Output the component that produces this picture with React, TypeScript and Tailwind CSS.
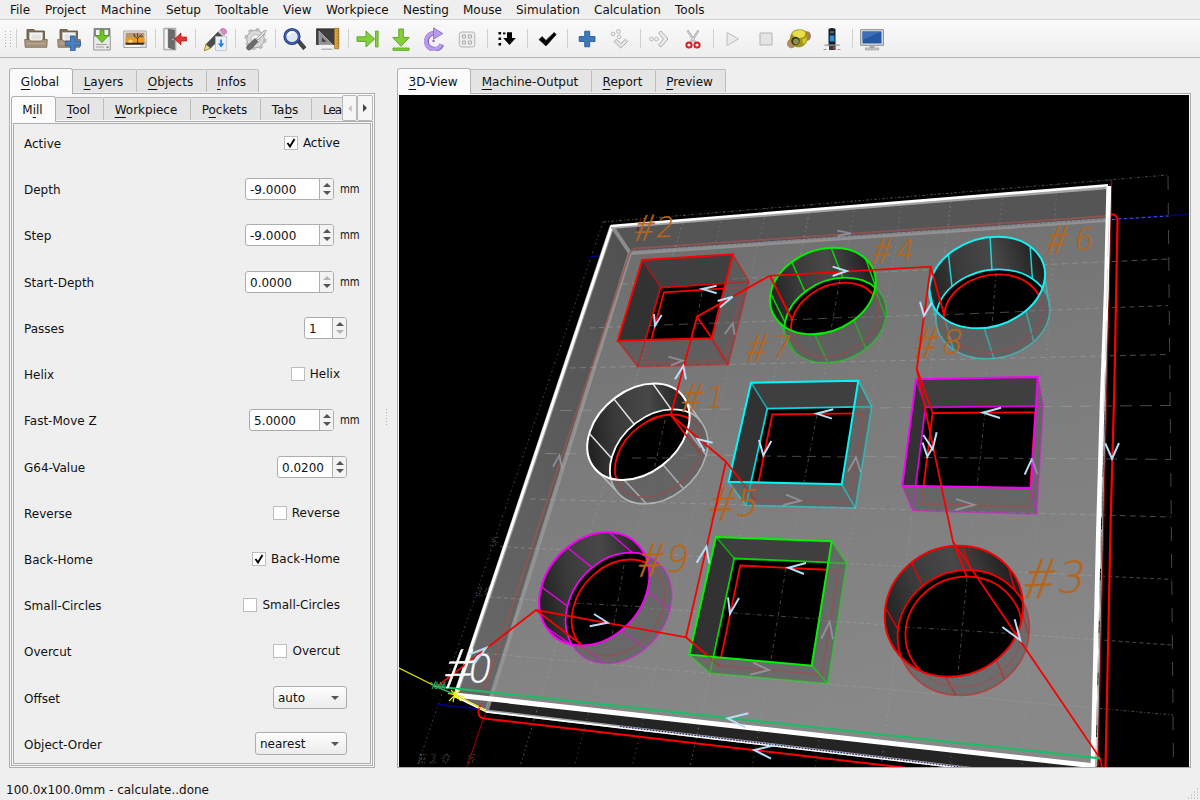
import React from "react";

type Pt = [number, number];

const MENUS: [string, string][] = [
  ["File", "w-[35px]"],
  ["Project", "w-[56px]"],
  ["Machine", "w-[65px]"],
  ["Setup", "w-[49px]"],
  ["Tooltable", "w-[68px]"],
  ["View", "w-[43px]"],
  ["Workpiece", "w-[77px]"],
  ["Nesting", "w-[60px]"],
  ["Mouse", "w-[53px]"],
  ["Simulation", "w-[78px]"],
  ["Calculation", "w-[81px]"],
  ["Tools", "w-[40px]"],
];

/* ---------- toolbar icons (24 x 24 each) ---------- */

const Folder = () => (
  <>
    <path d="M3 2.5h7l1 1.5h9.5v12H3z" fill="#7d6b55" stroke="#5f4f3c" strokeWidth=".8" />
    <path d="M5.5 5.5h13v10h-13z" fill="#f4f4f4" stroke="#cfcfcf" strokeWidth=".6" />
    <path d="M7.5 7.5h9v5h-9z" fill="#e2e2e2" />
    <path d="M.7 12.5h4.600l1.600 1.500h10.400l1.400-1.500h4.600l-.5 7.800H1.200z" fill="#a6947c" stroke="#7a6850" strokeWidth=".8" />
    <path d="M2 16.500h20" stroke="#b7a68e" strokeWidth="1.400" />
  </>
);

const ICONS: Record<string, React.ReactNode> = {
  open: <Folder />,
  add: (
    <>
      <Folder />
      <path d="M13.500 9h4.600v5.200h5.400v4.600h-5.400v5h-4.600v-5H8.400v-4.600h5.100z" fill="#4a80c0" stroke="#2c5c99" strokeWidth=".9" />
    </>
  ),
  save: (
    <>
      <path d="M4 1.500h16v7.500H4z" fill="#8b8e88" stroke="#6d6f6b" strokeWidth=".7" />
      <path d="M6 3h12v6H6z" fill="#f2f2f2" />
      <path d="M3.700 9h16.600v14H3.700z" fill="#e8e8e6" stroke="#8b8e88" strokeWidth=".9" />
      <path d="M6 17.500h11M6 20h8" stroke="#a2a4a0" />
      <path d="M10 3.200h4v5.400h4.400L12 15.600 5.600 8.600H10z" fill="#6fc42c" stroke="#438e0d" strokeWidth=".8" />
      <circle cx="17.500" cy="20.300" r="1" fill="#777" />
    </>
  ),
  image: (
    <>
      <path d="M.8 4h22.400v16.500H.8z" fill="#f4f4f2" stroke="#8d8d8a" strokeWidth=".8" />
      <path d="M2.500 5.600h19v12h-19z" fill="#b99a6e" />
      <path d="M2.500 11h19v4.500h-19z" fill="#f09a25" />
      <circle cx="7.500" cy="15" r="2.200" fill="#ffe27a" />
      <path d="M2.500 15.700h19v2h-19z" fill="#3c2a16" />
      <path d="M14.600 16V10.500M14.600 12l-4.200-4M14.600 11.500l4-4.200M14.600 10V6M12 9.500l-1-3M17 9l3 .5" stroke="#3c2a16" strokeWidth=".8" fill="none" />
      <path d="M17 20.500l6-5v5z" fill="#dedede" stroke="#9a9a9a" strokeWidth=".5" />
    </>
  ),
  exit: (
    <>
      <path d="M.8 1.300h12v21.500H.8z" fill="#dcdcdc" stroke="#8a8a8a" strokeWidth=".8" />
      <path d="M2.300 3h4v18.500h-4z" fill="#fafafa" />
      <path d="M5.200 2.200 11.500 3v19.500l-6.300-2z" fill="#6a6a6a" stroke="#444" strokeWidth=".5" />
      <circle cx="10" cy="12.500" r=".7" fill="#ddd" />
      <path d="M11.500 12 18 6v4h5.600v4H18v4z" fill="#e4322e" stroke="#b01512" strokeWidth=".7" />
    </>
  ),
  edit: (
    <>
      <path d="M1.500 23.500 3 17.500 15.500 4.500l4.500 4L7.500 21z" fill="#4c4e4b" stroke="#2c2e2b" strokeWidth=".6" />
      <path d="M1.300 23.600 3 17.500l4.500 3.700z" fill="#f2e27a" stroke="#8a7d20" strokeWidth=".5" />
      <path d="m15 5 4.500 4 1.300-1.400-4.500-4z" fill="#cfcfcf" />
      <path d="m17 3.200c2-3 6-1.500 6.500.8.200 2-1 3-2.300 4z" fill="#dd86c8" stroke="#a4529a" strokeWidth=".6" />
      <path d="M12.500 9.500h11V23.500h-11z" fill="#e9eff5" stroke="#b3bac2" strokeWidth=".7" />
      <path d="M17.200 12.500h1.800v4h2.300L18.100 20.500l-3.200-4h2.300z" fill="#1f83e0" />
    </>
  ),
  gear: (
    <>
      <circle cx="12.500" cy="12" r="8.800" fill="#dadada" stroke="#a2a2a2" strokeWidth="1" />
      <circle cx="12.500" cy="12" r="10" fill="none" stroke="#bcbcbc" strokeWidth="2.200" strokeDasharray="3.900 3.950" />
      <circle cx="12.500" cy="12" r="4.500" fill="#f3f3f3" stroke="#a9a9a9" strokeWidth=".8" />
      <path d="m13.500 11.500 6.500-7 2.500-1.500.8 1-1.800 2.400-6.500 6.600z" fill="#e6e6e6" stroke="#777" strokeWidth=".6" />
      <path d="m12 11.500 3 3-7.500 8c-2 1.500-5-.8-3.500-3.200z" fill="#6b6b6b" stroke="#484848" strokeWidth=".7" />
    </>
  ),
  search: (
    <>
      <path d="m13.500 14.500 2.500-2.500 7 8.200-2.700 2.600z" fill="#444" stroke="#222" strokeWidth=".6" />
      <circle cx="9" cy="9.500" r="7.200" fill="#dfe9f5" stroke="#233a86" strokeWidth="2.800" />
      <circle cx="9" cy="9.500" r="7" fill="none" stroke="#5271bd" strokeWidth="1" />
      <path d="M5 8.500c1-3 4-4 6.500-3" stroke="#fff" strokeWidth="1.800" fill="none" />
    </>
  ),
  measure: (
    <>
      <path d="M.3 1.800h22V17.500H.3z" fill="#3d3d3d" stroke="#222" strokeWidth=".7" />
      <path d="M6 21.500h10l1 1.500H5z" fill="#b5b5b5" />
      <path d="M3 17.500V4L16.500 17.500z" fill="#8d9094" stroke="#b8bbbe" strokeWidth=".7" />
      <path d="M6 14.800V10.500l4.400 4.300z" fill="#3d3d3d" />
      <path d="M18.500 1.300h4.300v20.500h-4.300z" fill="#d9a445" stroke="#96691c" strokeWidth=".7" />
      <path d="M20.500 4h2M20.500 7h2M20.500 10h2M20.500 13h2M20.500 16h2M20.500 19h2" stroke="#8b6219" strokeWidth=".7" />
    </>
  ),
  right: (
    <>
      <path d="M1 9.800h9V4l8.600 8L10 20v-5.600H1z" fill="#83cf3e" stroke="#55a112" strokeWidth=".9" />
      <path d="M19.500 4h2.600v16h-2.600z" fill="#83cf3e" stroke="#55a112" strokeWidth=".8" />
    </>
  ),
  down: (
    <>
      <path d="M9.800 2h4.600v8.500h5.800L12 19.300 3.800 10.500h6z" fill="#83cf3e" stroke="#55a112" strokeWidth=".9" />
      <path d="M4 21h16v2.400H4z" fill="#83cf3e" stroke="#55a112" strokeWidth=".8" />
    </>
  ),
  rotate: (
    <>
      <path d="M19.800 17.500A8 8 0 1 1 12.500 6.300" stroke="#8a67c4" strokeWidth="5" fill="none" />
      <path d="M19.300 17.200A8 8 0 1 1 12.500 6.300" stroke="#b89bea" strokeWidth="3.600" fill="none" />
      <path d="m11.500.8 9.300 5.800-9.300 5.600z" fill="#b89bea" stroke="#8a67c4" strokeWidth=".8" />
      <circle cx="11.500" cy="14" r="1.200" fill="#8a67c4" />
    </>
  ),
  fit: (
    <>
      <rect x="4.300" y="5" width="15.500" height="15" rx="2.500" fill="#ededed" stroke="#b5b5b5" />
      <path d="M7.500 11V8H10.500V11zM13.500 8h3v3h-3zM16.500 14v3h-3v-3zM10.500 17h-3v-3h3z" stroke="#aaa" strokeWidth="1" fill="none" />
    </>
  ),
  list: (
    <>
      <path d="M3.500 5h2.600v2.600H3.500zM3.500 10.500h2.600v2.600H3.500zM3.500 16h2.600v2.600H3.500z" fill="#000" />
      <path d="M12 5.200h5v5.800h3.800l-6.300 7-6.300-7H12z" fill="#000" />
      <path d="M8 5.500h2.500v1.800H8z" fill="#000" />
    </>
  ),
  check: <path d="m4 12.600 3-3 4 3.800 8.200-8 2 2.200L11 19z" fill="#000" stroke="#000" strokeWidth=".6" />,
  plus: <path d="M9.700 4.200h5v5.300H20v5h-5.300v5.300h-5v-5.300H4.200v-5h5.500z" fill="#3f78b9" stroke="#2a5c9c" strokeWidth=".9" />,
  dots: (
    <>
      <circle cx="5" cy="7" r="1.900" fill="#eee" stroke="#bcbcbc" />
      <circle cx="10.500" cy="4.500" r="1.900" fill="#eee" stroke="#bcbcbc" />
      <circle cx="11" cy="9.800" r="1.900" fill="#eee" stroke="#bcbcbc" />
      <path d="m6 14.500 2.200-2.200 4.600 4.200 4.600-4.200 2.200 2.200-6.800 6.500z" fill="#e5e5e5" stroke="#adadad" />
    </>
  ),
  chev: (
    <>
      <circle cx="3.500" cy="12" r="1.900" fill="#eee" stroke="#bcbcbc" />
      <circle cx="8.500" cy="12" r="1.900" fill="#eee" stroke="#bcbcbc" />
      <path d="m10.500 6 2.500-2 7 8-7 8-2.500-2 5-6z" fill="#ececec" stroke="#adadad" />
    </>
  ),
  cut: (
    <>
      <path d="M6.500 3.500 15 16.500M17.500 3.500 9 16.500" stroke="#989898" strokeWidth="2.200" />
      <path d="M6.700 4 14.700 16M17.300 4 9.300 16" stroke="#e4e4e4" strokeWidth="1" />
      <circle cx="8" cy="18" r="2.600" fill="none" stroke="#d42027" strokeWidth="2" />
      <circle cx="16" cy="18" r="2.600" fill="none" stroke="#d42027" strokeWidth="2" />
    </>
  ),
  play: <path d="M6 5.500v13l11.500-6.500z" fill="#ebebeb" stroke="#bdbdbd" strokeWidth="1" />,
  stop: <path d="M6 6h12v12H6z" fill="#e4e4e4" stroke="#b4b4b4" strokeWidth="1" />,
  mill: (
    <>
      <ellipse cx="4.500" cy="16.500" rx="4" ry="4.300" fill="#b98a6a" stroke="#8d6547" strokeWidth=".6" />
      <ellipse cx="20" cy="9" rx="3.400" ry="4.300" fill="#a97c55" stroke="#80603e" strokeWidth=".6" />
      <path d="M5 5.500C8 1.500 16 1.500 19 4.500c2.500 3 2.500 9-1 13-4 4-10 3.500-13.500 0-2.500-3-2-9 .5-12z" fill="#a0951a" />
      <path d="M5.500 6C9 2 16 2.500 18 5c1 3-1 6-5 6S5 9 5.500 6z" fill="#e9df4a" />
      <circle cx="8.500" cy="14" r="4.200" fill="#33331b" />
      <circle cx="9" cy="14.500" r="2.900" fill="#8a8f50" />
      <path d="M15 12c3 0 4-1 5-3 0 5-2 8-4 8z" fill="#d6c51f" />
    </>
  ),
  router: (
    <>
      <path d="M8.500 2q3.500-2 7 0v17h-7z" fill="#16202b" />
      <path d="M9.800 8.500h4.600v6H9.800z" fill="#2f8de0" />
      <path d="M10.200 4h3.600v2.500h-3.600z" fill="#536272" />
      <path d="M4.500 17.500h15.200v1.300H4.500z" fill="#9a9a9a" />
      <path d="M9 19h6.500v4H9z" fill="#3a3a3a" />
      <path d="M13 20h2.500v1.800H13z" fill="#c33" />
      <path d="M3.500 22.500h3M17.500 22.500h3" stroke="#9a9a9a" />
    </>
  ),
  monitor: (
    <>
      <path d="M.7 2.700h22.700v15.600H.7z" fill="#e0e0e0" stroke="#7e7e7e" strokeWidth=".9" />
      <path d="M2.500 4.500h19v12h-19z" fill="#2558a0" />
      <path d="M2.500 4.500h19L2.500 13z" fill="#3a6fb8" />
      <path d="M9.500 18.500h5v2.500h-5z" fill="#aaa" />
      <path d="M5.500 21h13.200v1.900H5.500z" fill="#d2d2d2" stroke="#909090" strokeWidth=".7" />
    </>
  ),
};

const TOOLBAR = "| open add save image | exit | edit | gear | search measure | right down rotate fit | list | check | plus dots | chev cut | play stop mill router | monitor".split(" ");

const Toolbar = () => (
  <div className="flex h-[39px] shrink-0 items-center border-y border-t-[#d2d2d2] border-b-[#b4b4b4] bg-linear-to-b from-[#fafafa] to-[#eeeeee]">
    <div className="ml-[5px] grid w-[8px] grid-cols-2 gap-x-[2px] gap-y-[2px]">
      {Array.from({ length: 12 }, (_, i) => (
        <span key={i} className="size-px bg-[#b0b0b0]" />
      ))}
    </div>
    {TOOLBAR.map((n, i) =>
      n === "|" ? (
        <span key={i} className="flex h-[19px] w-[7px] justify-center">
          <span className="w-px bg-[#d0d0d0]" />
        </span>
      ) : (
        <svg key={i} viewBox="0 0 24 24" className="mr-[5px] ml-[4px] size-6 shrink-0">
          {ICONS[n]}
        </svg>
      ),
    )}
  </div>
);

/* ---------- tabs and form ---------- */

const Mn = ({ text, at }: { text: string; at: number }) => (
  <span>
    {text.slice(0, at)}
    <span className="underline decoration-1 underline-offset-[3px]">{text.slice(at, at + 1)}</span>
    {text.slice(at + 1)}
  </span>
);

const Tab = ({ text, at = 0, w, active }: { text: string; at?: number; w: string; active?: boolean }) => (
  <div
    className={
      (active
        ? "h-[26px] rounded-t-[3px] border border-b-0 border-[#b0b0b0] bg-[#fbfbfb] pr-[2px] "
        : "mb-px h-[23px] rounded-tr-[2px] border border-l-0 border-b-0 border-[#bcbcbc] bg-[#e5e5e5] pt-[2px] pr-[2px] ") +
      "flex shrink-0 items-center justify-center overflow-hidden whitespace-nowrap " +
      w
    }
  >
    <Mn text={text} at={at} />
  </div>
);

const Tri = ({ up, dim }: { up?: boolean; dim?: boolean }) => (
  <svg viewBox="0 0 8 4" className="h-[4px] w-[8px]">
    <path d={up ? "M4 0 8 4H0z" : "M0 0h8L4 4z"} fill={dim ? "#b4b4b4" : "#555"} />
  </svg>
);

const Spin = ({ value, w, upOff, downOff }: { value: string; w: string; upOff?: boolean; downOff?: boolean }) => (
  <div className={"flex h-[22px] overflow-hidden rounded-[3px] border border-[#adadad] bg-white " + w}>
    <span className="flex-1 pt-px pl-[4px] leading-[21px]">{value}</span>
    <span className="flex w-[14px] flex-col items-center justify-center gap-[4px] border-l border-[#adadad] bg-[#f3f3f3]">
      <Tri up dim={upOff} />
      <Tri dim={downOff} />
    </span>
  </div>
);

const Check = ({ text, on }: { text: string; on?: boolean }) => (
  <div className="mr-[19px] flex items-center gap-[5px]">
    <span className="flex size-[14px] items-center justify-center border border-[#bdbdbd] bg-white">
      {on && (
        <svg viewBox="0 0 10 10" className="size-[10px]">
          <path d="M1.500 5 4 8.500 8.500 1" stroke="#000" strokeWidth="1.900" fill="none" />
        </svg>
      )}
    </span>
    {text}
  </div>
);

const Combo = ({ text, w }: { text: string; w: string }) => (
  <div className={"mr-[12px] flex h-[23px] items-center justify-between rounded-[3px] border border-[#adadad] bg-linear-to-b from-[#fdfdfd] to-[#ececec] pt-px pr-[7px] pl-[4px] " + w}>
    {text}
    <Tri />
  </div>
);

const Unit = ({ children }: { children: React.ReactNode }) => (
  <div className="flex items-center gap-[6px]">
    {children}
    <span className="w-[19px] origin-left scale-x-[.84]">mm</span>
  </div>
);

const ROWS: [string, React.ReactNode][] = [
  ["Active", <Check text="Active" on />],
  ["Depth", <Unit><Spin value="-9.0000" w="w-[89px]" /></Unit>],
  ["Step", <Unit><Spin value="-9.0000" w="w-[89px]" /></Unit>],
  ["Start-Depth", <Unit><Spin value="0.0000" w="w-[89px]" upOff /></Unit>],
  ["Passes", <div className="mr-[12px]"><Spin value="1" w="w-[43px]" downOff /></div>],
  ["Helix", <Check text="Helix" />],
  ["Fast-Move Z", <Unit><Spin value="5.0000" w="w-[85px]" /></Unit>],
  ["G64-Value", <div className="mr-[12px]"><Spin value="0.0200" w="w-[70px]" /></div>],
  ["Reverse", <Check text="Reverse" />],
  ["Back-Home", <Check text="Back-Home" on />],
  ["Small-Circles", <Check text="Small-Circles" />],
  ["Overcut", <Check text="Overcut" />],
  ["Offset", <Combo text="auto" w="w-[74px]" />],
  ["Object-Order", <Combo text="nearest" w="w-[92px]" />],
];

const LeftPanel = () => (
  <div className="flex w-[366px] flex-col">
    <div className="flex h-[25px] items-end">
      <Tab text="Global" w="w-[64px] relative z-10 -mb-px" active />
      <Tab text="Layers" w="w-[64px]" />
      <Tab text="Objects" w="w-[70px]" />
      <Tab text="Infos" w="w-[52px]" />
    </div>
    <div className="flex h-[675px] flex-col border border-[#adadad] bg-[#f9f9f9] px-px pt-px pb-px">
      <div className="flex h-[26px] items-end">
        <Tab text="Mill" at={1} w="w-[45px] relative z-10 -mb-px" active />
        <Tab text="Tool" w="w-[48px]" />
        <Tab text="Workpiece" w="w-[87px]" />
        <Tab text="Pockets" at={1} w="w-[70px]" />
        <Tab text="Tabs" at={2} w="w-[51px]" />
        <div className="mb-px flex h-[23px] w-[30px] items-center border-t border-[#bcbcbc] bg-[#e5e5e5] pt-[2px] pl-[11px] tracking-[-1px] whitespace-nowrap">Lea</div>
        <div className="flex h-[26px] w-[15px] items-center justify-center rounded-[2px] border border-[#b8b8b8] bg-[#f6f6f6]">
          <svg viewBox="0 0 4 8" className="h-[7px] w-[4px]"><path d="M4 0v8L0 4z" fill="#c2c2c2" /></svg>
        </div>
        <div className="flex h-[26px] w-[16px] items-center justify-center rounded-[2px] border border-[#b8b8b8] bg-[#f6f6f6]">
          <svg viewBox="0 0 4 8" className="h-[8px] w-[4px]"><path d="M0 0v8l4-4z" fill="#444" /></svg>
        </div>
      </div>
      <div className="flex min-h-0 flex-1 border border-[#adadad] bg-[#f9f9f9] p-px">
        <div className="flex flex-1 flex-col justify-between border border-[#adadad] bg-[#efefef] pt-[8px] pr-[11px] pb-[8px] pl-[10px]">
          {ROWS.map(([label, field]) => (
            <div key={label} className="flex h-[22px] items-center justify-between">
              <span className="pt-[2px]">{label}</span>
              {field}
            </div>
          ))}
        </div>
      </div>
    </div>
  </div>
);

/* ---------- 3D scene ---------- */

type Ell = [l: number, r: number, t: number, b: number, lean: number];

const ellMatrix = ([l, r, t, b, d]: Ell) => {
  const w = (r - l) / 2;
  return `matrix(${Math.sqrt(w * w - d * d)} 0 ${-d} ${(b - t) / 2} ${(l + r) / 2} ${(t + b) / 2})`;
};

const ellPoint = ([l, r, t, b, d]: Ell, deg: number): Pt => {
  const a = (deg * Math.PI) / 180;
  const w = (r - l) / 2;
  return [
    (l + r) / 2 + Math.sqrt(w * w - d * d) * Math.cos(a) - d * Math.sin(a),
    (t + b) / 2 + ((b - t) / 2) * Math.sin(a),
  ];
};

const E = ({ e, ...rest }: { e: Ell } & React.SVGProps<SVGCircleElement>) => (
  <circle r="1" transform={ellMatrix(e)} vectorEffect="non-scaling-stroke" {...rest} />
);

const Hole = ({ id, color, top, bot, tool, phase }: { id: string; color: string; top: Ell; bot: Ell; tool: Ell; phase: number }) => {
  const ribs = Array.from({ length: 8 }, (_, i) => {
    const a = ellPoint(top, phase + i * 45);
    const b = ellPoint(bot, phase + i * 45);
    return `M${a[0]} ${a[1]}L${b[0]} ${b[1]}`;
  }).join("");
  return (
    <g fill="none">
      <clipPath id={id}>
        <circle r="1" transform={ellMatrix(top)} />
      </clipPath>
      <E e={bot} fill="#000" fillOpacity=".2" />
      <g opacity=".45">
        <E e={bot} stroke={color} strokeWidth="1.600" />
        <path d={ribs} stroke={color} strokeWidth="1.600" />
        <E e={tool} stroke="#b84040" strokeWidth="1.600" />
      </g>
      <g clipPath={`url(#${id})`}>
        <E e={top} fill="url(#wall)" />
        <E e={bot} fill="#000" stroke={color} strokeWidth="1.800" />
        <path d={ribs} stroke={color} strokeWidth="1.500" strokeOpacity=".85" />
        <E e={tool} stroke="#f00" strokeWidth="1.800" />
      </g>
      <E e={top} stroke={color} strokeWidth="2" />
    </g>
  );
};

const poly = (p: Pt[]) => p.map((q) => q.join(",")).join(" ");

const Pocket = ({ id, color, top, bot, tool }: { id: string; color: string; top: Pt[]; bot: Pt[]; tool: Pt[] }) => {
  const ribs = top.map((p, i) => `M${p.join(" ")}L${bot[i].join(" ")}`).join("");
  return (
    <g fill="none">
      <clipPath id={id}>
        <polygon points={poly(top)} />
      </clipPath>
      <polygon points={poly([top[3], top[2], top[1], bot[1], bot[2], bot[3]])} fill="#000" fillOpacity=".2" />
      <g opacity=".45" strokeWidth="1.700">
        <polygon points={poly(bot)} stroke={color} />
        <polygon points={poly(tool)} stroke="#b84040" />
      </g>
      <path d={ribs} stroke={color} strokeOpacity=".55" strokeWidth="1.500" />
      <g clipPath={`url(#${id})`}>
        <polygon points={poly(top)} fill="#3f3f3f" />
        <polygon points={poly([top[0], bot[0], bot[3], top[3]])} fill="#323232" />
        <polygon points={poly(bot)} fill="#000" stroke={color} strokeOpacity=".85" strokeWidth="1.800" />
        <path d={ribs} stroke={color} strokeOpacity=".6" strokeWidth="1.500" />
        <polygon points={poly(tool)} stroke="#f00" strokeWidth="1.800" />
      </g>
      <polygon points={poly(top)} stroke={color} strokeWidth="2" />
    </g>
  );
};

const GRID_ROWS: [number, number, number, number, string][] = [
  [603, 222, 1168, 175, "3 2 1 2"],
  [622, 284, 1168, 259, "6 4"],
  [590, 328, 1168, 305.5, "5 4"],
  [570, 368, 1169, 354.5, "6 4"],
  [560, 410.5, 1170, 405.5, "12 8"],
  [545, 453.5, 1170, 459.5, "12 8"],
  [530, 499, 1171, 517, "6 4"],
  [500, 546.7, 1172, 579.5, "4 3"],
  [490, 597, 1172, 645, "4 3"],
  [470, 652, 1173, 715, "3 2 1 2"],
];

const GRID_COLS: Pt[] = [
  [685, 520], [724, 574], [767, 632], [811, 690], [856, 752],
  [903, 815], [952, 881], [1003, 950], [1057, 1022], [1110, 1096],
];

const LABELS: { d: string; x: number; dx: number; y: number; h: number }[] = [
  { d: "2", x: 633, dx: 655, y: 238, h: 20 },
  { d: "4", x: 870, dx: 895, y: 261, h: 20 },
  { d: "6", x: 1044, dx: 1073, y: 251, h: 22 },
  { d: "7", x: 744, dx: 770, y: 359, h: 22 },
  { d: "8", x: 912, dx: 940, y: 355, h: 24 },
  { d: "1", x: 679, dx: 704, y: 409, h: 22 },
  { d: "5", x: 707, dx: 734, y: 517, h: 26 },
  { d: "9", x: 636, dx: 664, y: 573, h: 26 },
  { d: "3", x: 1021, dx: 1056, y: 594, h: 31 },
];

const Arrows = ({ x, y, d, dim }: { x: number; y: number; d: string; dim?: boolean }) => (
  <g transform={`translate(${x} ${y}) scale(.33333)`}>
    <path d={d} fill="none" stroke={dim ? "#a3b3c2" : "#b9dcf7"} strokeOpacity={dim ? 0.6 : 1} strokeWidth={dim ? 5.5 : 6} />
  </g>
);

const HASH = "Lato, 'Open Sans', sans-serif";
const DIGIT = "'DejaVu Sans Light', 'DejaVu Sans', sans-serif";

const Scene = () => (
  <svg viewBox="399 95 790 672" className="block h-[672px] w-[790px] bg-black">
    <defs>
      <linearGradient id="face" x1="0" y1="0" x2=".25" y2="1">
        <stop offset="0" stopColor="#686868" />
        <stop offset=".45" stopColor="#7a7a7a" />
        <stop offset="1" stopColor="#888" />
      </linearGradient>
      <linearGradient id="side" x1="1" y1="0" x2="0" y2="1">
        <stop offset="0" stopColor="#505050" />
        <stop offset="1" stopColor="#6a6a6a" />
      </linearGradient>
      <linearGradient id="wall" x1="0" y1=".7" x2="1" y2=".3">
        <stop offset="0" stopColor="#1c1c1c" />
        <stop offset=".3" stopColor="#3a3a3a" />
        <stop offset=".6" stopColor="#484848" />
        <stop offset="1" stopColor="#1a1a1a" />
      </linearGradient>
    </defs>

    {/* stock */}
    <polygon points="455,695 486,711 1095,782 1097,766" fill="#242424" />
    <polygon points="612,226 1108,185 1095,766 455,695" fill="url(#face)" />
    <polygon points="612,226 1108,185 1108,220 630,253" fill="#555" />
    <polygon points="612,226 630,253 486,711 455,695" fill="url(#side)" />
    <g fill="none">
      <path d="M612 226 630 253" stroke="#8c8c8c" strokeWidth="4" />
      <path d="M1107 220 630 253 487 710" stroke="#979797" strokeWidth="4" strokeOpacity=".85" />
      <path d="M1107 216 636 248.500Q631 249 629 255L480 702" stroke="#9a5454" strokeWidth="1.800" strokeOpacity=".8" />
      <path d="M631 251 1107 219" stroke="#5b5b98" strokeWidth="1" strokeDasharray="2 3" strokeOpacity=".7" />
    </g>

    {/* grid */}
    <g stroke="#a8a8a8" strokeOpacity=".42" fill="none">
      {GRID_ROWS.map(([a, b, c, d, dash], i) => (
        <path key={i} d={`M${a} ${b} ${c} ${d}`} strokeDasharray={dash} strokeOpacity=".45" />
      ))}
      {GRID_COLS.map(([a, b], i) => (
        <path key={i} d={`M${a} ${222 - ((a - 603) * 47) / 565}L${b} 767`} strokeDasharray={i % 3 ? "1 4" : "1 3 2 3"} strokeWidth="1.200" />
      ))}
      <path d="M603 222 417 767" strokeDasharray="1 3 2 3" />
      <path d="M1168 176 1173.500 760" strokeDasharray="14 13" />
    </g>
    <g fill="none" stroke="#8a8a8a" strokeWidth=".6" strokeDasharray="1 2" fontFamily="DejaVu Sans" fontSize="13" fontStyle="italic">
      <text x="418" y="763" textLength="32">E10</text>
      <text x="467" y="763">5</text>
      <text x="490" y="546">5</text>
      <text x="476" y="596">10</text>
    </g>

    {/* axes */}
    <g fill="none">
      <path d="M486 711 467 767" stroke="#800" strokeWidth="1.200" />
      <path d="M641 218 637 232" stroke="#800" />
      <path d="M438 704.500 482 709.500M590 257 602 255.500" stroke="#000090" strokeWidth="1.300" />
      <path d="M1112 219.500 1189 214.300" stroke="#00007c" strokeWidth="1.400" />
      <path d="M1112 219.500 1168 216" stroke="#5a5ac0" strokeDasharray="3 3" />
    </g>

    <Hole id="h4" color="#00f000" top={[770, 875.7, 247.7, 334.3, 11]} bot={[784.5, 886.3, 277.7, 362.7, 10]} tool={[791, 879, 282.7, 356.7, 10]} phase={-93} />
    <Hole id="h6" color="#19f0f4" top={[929.3, 1045, 236.7, 328.3, 10]} bot={[936, 1049.7, 269.3, 358.7, 6]} tool={[944, 1042.3, 274.3, 352.3, 5]} phase={-97} />
    <Hole id="h1" color="#fff" top={[587.3, 689.5, 383.5, 480, 16]} bot={[610, 707.7, 409.3, 503.8, 14]} tool={[615, 701.7, 414.5, 497.3, 14]} phase={-92} />
    <Hole id="h9" color="#f800f8" top={[539.300, 649.300, 532.300, 645.500, 13]} bot={[565.700, 671.700, 552.700, 663.500, 12]} tool={[571.700, 664.300, 559.500, 655.700, 12]} phase={-88} />
    <Hole id="h3" color="#f40000" top={[884.800, 1023, 545.700, 676.800, 5]} bot={[897.700, 1029.500, 570, 695.500, 4]} tool={[905.500, 1022, 576.700, 686.700, 3]} phase={-87} />

    <Pocket id="p2" color="#fa0000" top={[[642.300, 260], [732.700, 254.300], [711.700, 338.300], [617.800, 340.700]]} bot={[[660.700, 287.700], [749, 281.700], [728.300, 364.500], [637.700, 366.700]]} tool={[[664, 292.300], [743.300, 287.300], [724, 360.700], [645, 362.300]]} />
    <Pocket id="p5" color="#00f8f8" top={[[751, 382.700], [858.300, 380.700], [841.700, 484.300], [728.500, 481.700]]} bot={[[767.300, 408.700], [871.700, 406.700], [855.300, 508], [746, 505.300]]} tool={[[772.300, 414.300], [863.300, 413.300], [849.300, 502], [755, 500]]} />
    <Pocket id="p8" color="#f800f8" top={[[916, 379.300], [1037.700, 376.900], [1031, 488], [902.300, 485.700]]} bot={[[925.500, 407.300], [1043.300, 406], [1036.700, 514], [912.700, 510.700]]} tool={[[932.700, 413], [1035.300, 412.300], [1029, 506.700], [921.300, 503.700]]} />
    <Pocket id="p7" color="#00f400" top={[[716, 536.900], [831.700, 541.300], [811.700, 665.700], [689.300, 654.700]]} bot={[[734.300, 558.500], [846.700, 563.300], [827.700, 683.500], [710, 673]]} tool={[[740.300, 565.500], [838.300, 570.300], [821.700, 674.700], [719.300, 665.700]]} />

    {/* grid seen through the openings */}
    <g stroke="#777" strokeOpacity=".6" fill="none">
      <path d="M649 325.500 717 323M788 320 868 316.500M940 315 1035 311M632 458 688 458M762 456 846 457M924 457.500 1032 458.500" strokeDasharray="9 6" />
      <path d="M575 603 645 607M733 613 820 619M905 627 1018 634" strokeDasharray="5 3 1 3" />
      <path d="M702 293 693 338M840 280 831 330M996 273 992 326M665 420 653 475M817 415 804 482M985 412 977 487M624 565 612 636M786 568 771 660M967 578 958 674" strokeDasharray="4 3 1 3" />
    </g>

    {/* right and front edges */}
    <g fill="none">
      <path d="M1111 187 1097 766" stroke="#a9a9a9" strokeWidth="1.500" />
      <path d="M1111.700 180 1098 767" stroke="#7c0f12" strokeWidth="1.300" />
      <path d="M612 226 456 694" stroke="#a5a5a5" strokeWidth="4.500" />
      <path d="M612 225.500 455.500 694" stroke="#fff" strokeWidth="2.800" />
      <path d="M611 227.500 1109 187.500" stroke="#a5a5a5" strokeWidth="3" />
      <path d="M611 226 1108 185.300" stroke="#fff" strokeWidth="2.600" />
      <path d="M1108.800 186 1106.300 290 1102.300 400 1098.500 530 1093 767" stroke="#fff" strokeWidth="4.800" strokeLinejoin="round" />
      <path d="M1109 217 1104 400 1096 767" stroke="#dcdcdc" strokeWidth="1" strokeDasharray="40 12" />
      <path d="M455 695 1095 766" stroke="#fff" strokeWidth="5" />
      <path d="M455 696 486 711" stroke="#fff" strokeWidth="2.600" />
      <path d="M486 711 975 769" stroke="#a0a0a0" strokeWidth="3.200" />
      <path d="M486 711.800 970 769" stroke="#fff" strokeWidth="1.700" />
      <path d="M620 726.500 965 767.500" stroke="#222278" strokeWidth="1.200" strokeDasharray="1.500 1.500" />
      <path d="M1111 214.500Q1118 214 1117.500 222L1114.300 390 1110.700 520 1105.500 767" stroke="#f00" strokeWidth="2.200" />
      <path d="M480 705 478.500 712Q478.500 718 484 718.500L710 745 903 767.500" stroke="#f00" strokeWidth="2" />
    </g>

    {/* object numbers */}
    {LABELS.map((l) => (
      <text key={l.d} transform={`translate(${l.x} ${l.y}) rotate(-2) skewX(-12)`} fill="#b5661c" stroke="#b5661c" strokeWidth=".4">
        <tspan x="0" y={l.h * 0.15} fontFamily={HASH} fontWeight="300" fontSize={l.h * 1.8}>#</tspan>
        <tspan x={l.dx - l.x} y="0" fontFamily={DIGIT} fontWeight="200" fontSize={l.h * 1.38}>{l.d}</tspan>
      </text>
    ))}

    {/* rapid moves */}
    <g fill="none" stroke="#f60000" strokeWidth="1.800">
      <path d="M437 686.500 536 610 686 637.300 726 461.700 670.700 415 697 316.700 769.500 275.800 930.700 266.700 916.800 369 953 541.700 1100 758.300 1102 767" />
      <path d="M536 610 581.700 645M686 637.300 707 655M726 461.700 742 482M670.700 415 687 436.500M697 316.700 711.700 338M770 276 791.700 319M930.700 266.700 944.300 315.700M916.800 369 932.700 413M953 541.700 966.700 576.700" />
      <path d="M707 655 719 666M742 482 755 500M687 436.500 700 453M711.700 338 724 360.700" strokeOpacity=".35" />
    </g>
    <path d="M437 686.500 1100 758.300" stroke="#20bb69" strokeWidth="2.200" />
    <path d="M399 668 437 687M456 695 486 711" stroke="#e4e400" strokeWidth="1.200" />
    <path d="M437 687 456 695" stroke="#2fae5c" strokeWidth="1.500" />
    <path d="M448 693.500 464 696.500M456 689 453 702M449 701 460 690M451 690 461 701" stroke="#f0f000" strokeWidth="1.200" />
    <path d="M431 682 436 689M436 681 432 689M437 682v7M440 682l5 7M445 682l-4 7M431 685h15" stroke="#20a860" strokeWidth="1.200" />

    <text transform="translate(449 683) rotate(-2) skewX(-12)" fill="#fff" stroke="#fff" strokeWidth=".4">
      <tspan x="-7" y="5" fontFamily={HASH} fontWeight="300" fontSize="54">#</tspan>
      <tspan x="17" y="0" fontFamily={DIGIT} fontWeight="200" fontSize="38">0</tspan>
    </text>

    <Arrows x={590} y={170} d="M380 347 337 357 380 370M192 432 195 467 215 435M383 393 428 380 390 412M728 290 770 303 728 318M255 628 280 588 288 628" />
    <Arrows x={590} y={170} dim d="M742 182 783 190 743 198M235 560 278 572 243 586M404 493 428 460 434 495" />
    <Arrows x={880} y={170} d="M120 395 132 437 155 398" />
    <Arrows x={570} y={370} d="M790 118 740 131 786 146M567 210 580 256 604 213M428 218 382 207 404 244" />
    <Arrows x={570} y={370} dim d="M648 374 692 392 640 405M834 304 858 262 872 306M-51 290 -32 256 -24 296" />
    <Arrows x={880} y={360} d="M363 143 309 158 360 174M130 225 158 268 170 217M128 248 142 290 158 262M434 344 456 296M676 250 696 296 717 249" />
    <Arrows x={880} y={360} dim d="M456 296 472 343M228 417 283 435 226 450" />
    <Arrows x={390} y={520} d="M612 282 653 308 599 319M238 403 288 384 252 432M920 128 949 80 958 130" />
    <Arrows x={680} y={520} d="M378 129 325 143 372 162M144 232 150 281 177 234M205 580 143 595 196 622M283 676 223 690 273 716" />
    <Arrows x={680} y={520} dim d="M424 356 449 305 459 358M220 428 267 450 211 464" />
    <Arrows x={870} y={520} d="M397 321 451 361 434 298" />
  </svg>
);

export default function App() {
  return (
    <div className="flex h-[800px] w-[1200px] flex-col overflow-hidden bg-[#efefef] font-['DejaVu_Sans',sans-serif] text-[12px] leading-[16px] text-[#111]">
      <div className="flex h-[19px] shrink-0 items-center pl-[10px]">
        {MENUS.map(([m, w]) => (
          <span key={m} className={"shrink-0 " + w}>{m}</span>
        ))}
      </div>
      <Toolbar />
      <div className="flex h-[710px] shrink-0 pt-[10px] pl-[9px]">
        <LeftPanel />
        <div className="flex w-[22px] items-center justify-center pb-[2px]">
          <div className="flex flex-col gap-[2px]">
            {Array.from({ length: 6 }, (_, i) => (
              <span key={i} className="size-px bg-[#b4b4b4]" />
            ))}
          </div>
        </div>
        <div className="flex w-[794px] flex-col">
          <div className="flex h-[25px] items-end">
            <Tab text="3D-View" w="w-[74px] relative z-10 -mb-px" active />
            <Tab text="Machine-Output" w="w-[121px]" />
            <Tab text="Report" w="w-[64px]" />
            <Tab text="Preview" w="w-[70px]" />
          </div>
          <div className="h-[675px] border border-[#adadad] bg-[#f9f9f9] p-px">
            <Scene />
          </div>
        </div>
      </div>
      <div className="flex flex-1 items-center justify-between pt-[12px] pl-[6px]">
        <span>100.0x100.0mm - calculate..done</span>
        <svg viewBox="0 0 12 12" className="size-3 self-end">
          <path d="M9 1h1M9 4h1M6 4h1M9 7h1M6 7h1M3 7h1M9 10h1M6 10h1M3 10h1M0 10h1" stroke="#a8a8a8" />
        </svg>
      </div>
    </div>
  );
}
